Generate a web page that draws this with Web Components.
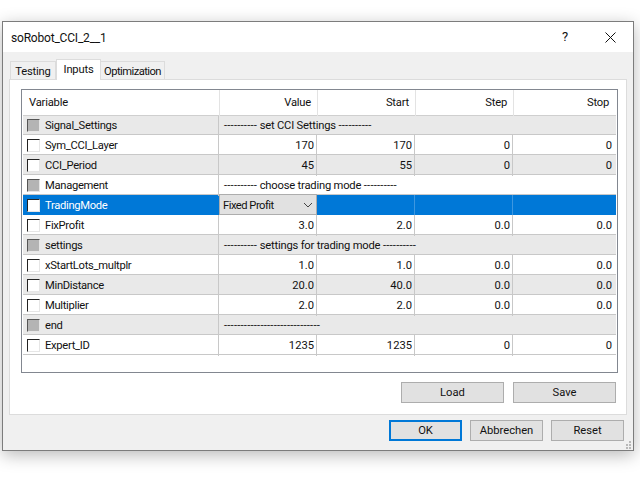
<!DOCTYPE html>
<html><head><meta charset="utf-8"><style>
html,body{margin:0;padding:0;background:#fff}
body{padding:21px 0 0 2px;font:11.2px/16px Roboto,sans-serif;color:#111;height:459px;overflow:hidden}
</style></head><body>
<x-window title="soRobot_CCI_2__1">
  <x-tabs slot="tabs"></x-tabs>
  <x-grid>
    <x-row kind="group" label="Signal_Settings" note="---------- set CCI Settings ----------" alt></x-row>
    <x-row label="Sym_CCI_Layer" values="170,170,0,0"></x-row>
    <x-row label="CCI_Period" values="45,55,0,0" alt></x-row>
    <x-row kind="group" label="Management" note="---------- choose trading mode ----------"></x-row>
    <x-row kind="select" label="TradingMode" note="Fixed Profit"></x-row>
    <x-row label="FixProfit" values="3.0,2.0,0.0,0.0"></x-row>
    <x-row kind="group" label="settings" note="---------- settings for trading mode ----------" alt></x-row>
    <x-row label="xStartLots_multplr" values="1.0,1.0,0.0,0.0"></x-row>
    <x-row label="MinDistance" values="20.0,40.0,0.0,0.0" alt></x-row>
    <x-row label="Multiplier" values="2.0,2.0,0.0,0.0"></x-row>
    <x-row kind="group" label="end" note="-----------------------------" alt></x-row>
    <x-row label="Expert_ID" values="1235,1235,0,0"></x-row>
  </x-grid>
  <x-btn slot="load" w="103">Load</x-btn>
  <x-btn slot="load" w="103">Save</x-btn>
  <x-btn slot="foot" w="73" primary>OK</x-btn>
  <x-btn slot="foot" w="73">Abbrechen</x-btn>
  <x-btn slot="foot" w="73">Reset</x-btn>
</x-window>
<script>
class XWindow extends HTMLElement{constructor(){super();this.attachShadow({mode:'open'}).innerHTML=`<style>
:host{display:flex;flex-direction:column;box-sizing:border-box;width:632px;height:430px;background:#f0f0f0;border:1px solid #7c7c7c;box-shadow:0 4px 16px rgba(0,0,0,.28);position:relative}
.title{height:30px;background:#fff;display:flex;align-items:center;padding-left:8px;flex:none;font-size:12px}
.title span{flex:1;padding-top:1px}
.title span#t{letter-spacing:-.2px}
.help{width:12px;flex:none!important;text-align:center;margin-right:34px;font-size:13px;padding-top:0!important;margin-bottom:1px}
svg.x{margin-right:17px;flex:none}
.body{flex:1;padding:6px 6px 0 6px;display:flex;flex-direction:column}
.panel{box-sizing:border-box;height:336px;background:#fff;border:1px solid #dcdcdc;padding:9px 8px 0 11px;margin-top:-1px;width:618px}
.load{display:flex;justify-content:flex-end;gap:9px;margin-top:9px;padding-right:2px}
.foot{display:flex;justify-content:flex-end;gap:8px;margin-top:5px;padding-right:3px}
.grip{position:absolute;right:1px;bottom:1px}
</style>
<div class="title"><span id="t"></span><span class="help">?</span>
<svg class="x" width="11" height="11" viewBox="0 0 11 11"><path d="M.5.5l10 10M10.5.5l-10 10" stroke="#111" fill="none"/></svg></div>
<div class="body"><slot name="tabs"></slot>
<div class="panel"><slot></slot><div class="load"><slot name="load"></slot></div></div>
<div class="foot"><slot name="foot"></slot></div></div>
<svg class="grip" width="8" height="8" viewBox="0 0 8 8" fill="#b8b8b8"><rect x="5" y="0" width="2" height="2"/><rect x="2" y="3" width="2" height="2"/><rect x="5" y="3" width="2" height="2"/><rect x="2" y="6" width="2" height="2"/><rect x="5" y="6" width="2" height="2"/></svg>`;
this.shadowRoot.getElementById('t').textContent=this.getAttribute('title');this.removeAttribute('title');}}
class XTabs extends HTMLElement{constructor(){super();this.attachShadow({mode:'open'}).innerHTML=`<style>
:host{display:flex;align-items:flex-end;height:22px;padding-left:2px;position:relative;z-index:1;letter-spacing:-.2px}
.t{box-sizing:border-box;height:18px;border:1px solid #dcdcdc;border-bottom:none;background:#f0f0f0;line-height:19px;margin-bottom:1px;margin-left:-1px;text-align:center}
.t:first-child{margin-left:0;padding-left:1px}
.a{height:21px;background:#fff;margin-bottom:0;line-height:19px;position:relative;z-index:2;margin-left:0}
.o{letter-spacing:-.55px}
</style><div class="t" style="width:46px">Testing</div><div class="t a" style="width:45px">Inputs</div><div class="t o" style="width:65px">Optimization</div>`;}}
class XGrid extends HTMLElement{constructor(){super();this.attachShadow({mode:'open'}).innerHTML=`<style>
:host{display:block;box-sizing:border-box;width:597px;height:284px;border:1px solid #828790;padding:0 1px 0 1px;background:#fff}
.h{display:grid;grid-template-columns:197px 98px 98px 98px 102px;height:25px;border-bottom:1px solid #cfcfcf;box-sizing:content-box;width:593px}
.h div{border-right:1px solid #e3e3e3;text-align:right;padding:0 6px;line-height:26px;box-sizing:border-box;letter-spacing:-.2px}
.h div:first-child{text-align:left}.h div:last-child{border-right:0;padding-right:7px}
</style><div class="h"><div>Variable</div><div>Value</div><div>Start</div><div>Step</div><div>Stop</div></div><slot></slot>`;}}
class XRow extends HTMLElement{constructor(){super();
const k=this.getAttribute('kind')||'',l=this.getAttribute('label'),n=this.getAttribute('note')||'',v=(this.getAttribute('values')||'').split(',');
let cells='';
const note=n.replace(/-+/g,m=>`<span class="d">${m}</span>`);
if(k==='group')cells=`<div class="c note">${note}</div>`;
else if(k==='select')cells=`<div class="c sel"><x-select>${n}</x-select></div><div class="c"></div><div class="c"></div><div class="c last"></div>`;
else cells=v.map((x,i)=>`<div class="c num${i==3?' last':''}">${x}</div>`).join('');
this.attachShadow({mode:'open'}).innerHTML=`<style>
:host{display:grid;grid-template-columns:196px 98px 98px 98px 103px;height:20px;box-sizing:border-box;width:593px;border-bottom:1px solid #c8c8c8;background:#fff}
:host(:first-child){height:19px}
:host([alt]){background:#e9e9e9}
:host([kind=select]){background:#0078d7;color:#fff;border-bottom-color:#0078d7}
.n{display:flex;align-items:center;padding-left:4px;gap:5px;border-right:1px solid #c8c8c8;letter-spacing:-.3px}
.n span{padding-top:1px}
:host([kind=select]) .n{border-right:0}
.c{box-sizing:border-box;border-right:1px solid #c8c8c8;padding:0 2px 0 4px;line-height:21px;white-space:nowrap}
:host(:first-child) .c{line-height:19px}
.num{text-align:right}
.last{border-right:0;padding-right:4px}
.note{grid-column:2/6;border-right:0;padding-left:5px;letter-spacing:-.2px}
.d{letter-spacing:.22px}
.sel{padding:0;position:relative}
:host([kind=select]) .c{border-right-color:#3d97e0}
</style><div class="n"><x-check ${k==='group'?'group':''}></x-check><span>${l}</span></div>${cells}`;}}
class XCheck extends HTMLElement{constructor(){super();this.attachShadow({mode:'open'}).innerHTML=`<style>
:host{display:block;box-sizing:border-box;width:13px;height:13px;background:#fff;border:1px solid;border-color:#222 #e6e6e6 #e6e6e6 #222;flex:none}
:host([group]){background:#b4b4b4;border-color:#555 #e6e6e6 #e6e6e6 #555}
</style>`;}}
class XSelect extends HTMLElement{constructor(){super();this.attachShadow({mode:'open'}).innerHTML=`<style>
:host{display:flex;align-items:center;justify-content:space-between;box-sizing:border-box;height:21px;width:98px;margin-top:-1px;background:#e1e1e1;border:1px solid #adadad;color:#111;padding:0 3px 0 3px;line-height:19px;letter-spacing:-.5px}
span{padding-top:2px}
svg{flex:none}
</style><span><slot></slot></span><svg width="10" height="6" viewBox="0 0 10 6"><path d="M1 1l4 4 4-4" fill="none" stroke="#444"/></svg>`;}}
class XBtn extends HTMLElement{constructor(){super();this.attachShadow({mode:'open'}).innerHTML=`<style>
:host{display:flex;align-items:center;justify-content:center;box-sizing:border-box;height:21px;padding-top:1px;background:#e1e1e1;border:1px solid #adadad}
:host([primary]){border:2px solid #0078d7}
</style><slot></slot>`;this.style.width=this.getAttribute('w')+'px';}}
customElements.define('x-window',XWindow);customElements.define('x-tabs',XTabs);customElements.define('x-grid',XGrid);customElements.define('x-row',XRow);customElements.define('x-check',XCheck);customElements.define('x-select',XSelect);customElements.define('x-btn',XBtn);
</script>
</body></html>
